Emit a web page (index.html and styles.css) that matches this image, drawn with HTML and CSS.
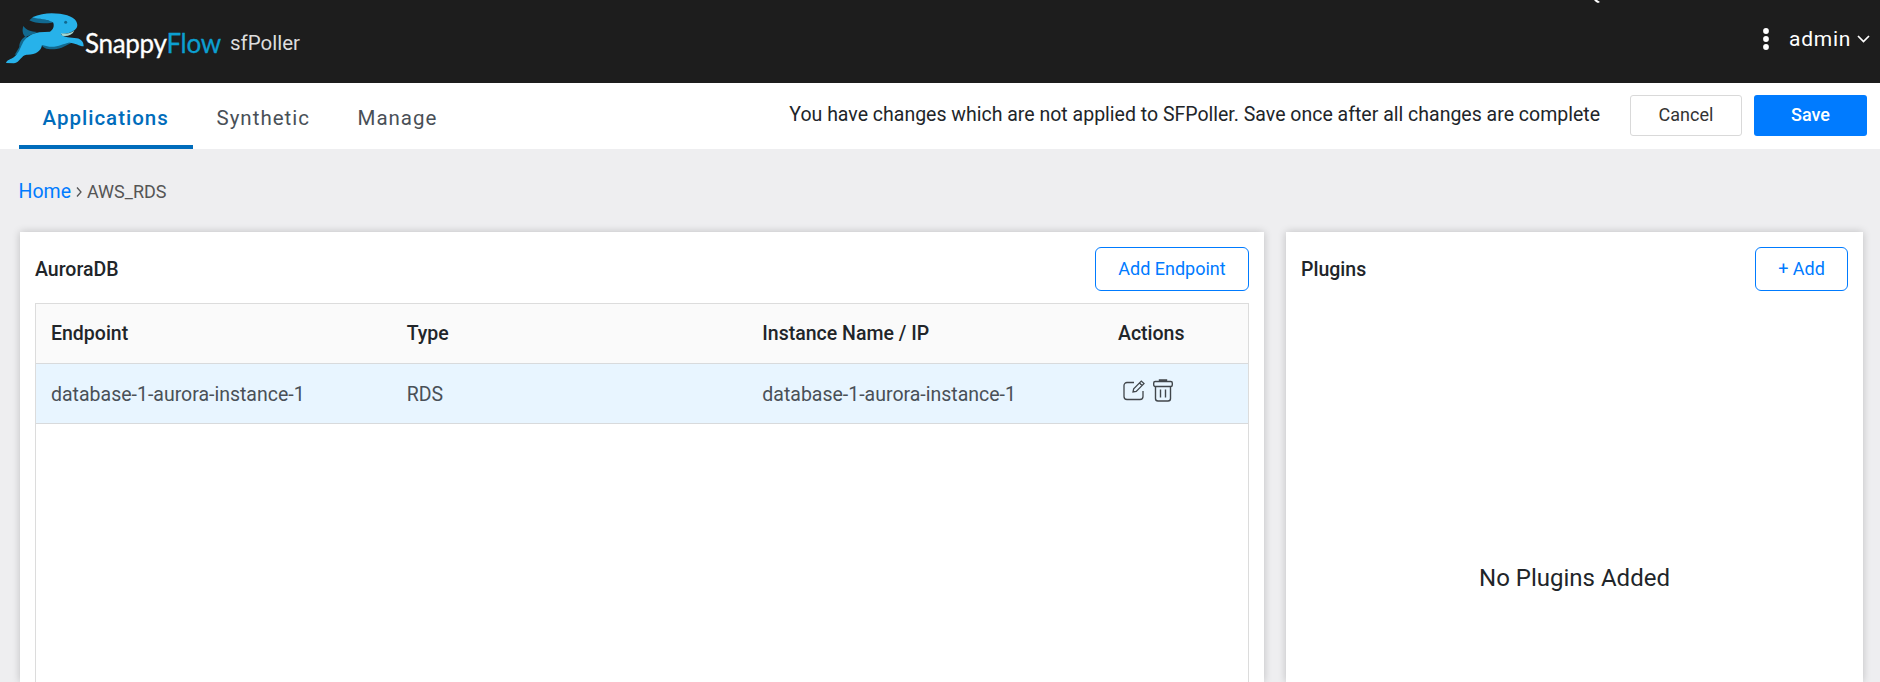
FILE: index.html
```html
<!DOCTYPE html>
<html lang="en">
<head>
<meta charset="utf-8">
<title>SnappyFlow sfPoller</title>
<link rel="stylesheet" href="styles.css">
</head>
<body>
<header class="topbar">
  <div class="brand">
    <svg class="brand-mark" viewBox="0 16 252 162" width="84" height="54">
      <path d="M88 38L100 27 162 42 156 45C130 49 102 47 88 38Z M70 55C66 68 67 80 77 88L112 73C92 72 80 68 70 55Z M80 84C64 92 58 104 58 118L44 142 80 130Z M122 108C130 125 155 130 185 120L215 105Z" fill="#12698f"/>
      <path d="M97 29C125 15 155 15 180 18C212 22 232 35 232 52C232 68 212 78 183 79C192 91 212 89 230 92C244 94 251 103 251 116C236 115 228 106 208 105C190 107 172 120 148 117L126 112C124 130 106 142 80 141C64 142 60 164 42 167L18 166C20 156 33 155 43 147C58 135 60 122 67 109C74 92 92 78 118 74L150 72C160 66 164 54 159 44C140 34 118 35 97 29Z" fill="#27b2ea"/>
      <path d="M183 77C200 79 212 76 223 69C216 83 199 88 187 84Z" fill="#a5d7d1"/>
      <circle cx="197" cy="44" r="4.500" fill="#12698f"/>
    </svg>
    <span class="brand-name">Snappy<span class="brand-flow">Flow</span></span>
    <span class="brand-product">sfPoller</span>
  </div>
  <svg class="cursor" width="10" height="4" viewBox="0 0 10 4"><path d="M4 0H7L10 2 8 3 6 2Z" fill="#fff"/></svg>
  <div class="user">
    <svg width="6" height="22" viewBox="0 0 6 22" fill="#fff"><circle cx="3" cy="3" r="2.900"/><circle cx="3" cy="11" r="2.900"/><circle cx="3" cy="19" r="2.900"/></svg>
    <span class="user-name">admin</span>
    <svg width="13" height="8" viewBox="0 0 13 8" fill="none" stroke="#fff" stroke-width="1.700"><path d="M1 1L6.500 6.500 12 1"/></svg>
  </div>
</header>
<nav class="nav">
  <div class="tabs">
    <a class="tab tab-active">Applications</a>
    <a class="tab">Synthetic</a>
    <a class="tab">Manage</a>
  </div>
  <div class="notice">
    <span class="notice-text">You have changes which are not applied to SFPoller. Save once after all changes are complete</span>
    <button class="btn cancel">Cancel</button>
    <button class="btn save">Save</button>
  </div>
</nav>
<div class="crumbs">
  <a class="home">Home</a>
  <svg width="6" height="10" viewBox="0 0 6 10" fill="none" stroke="#555" stroke-width="1.300"><path d="M1 .5L5 5 1 9.500"/></svg>
  <span class="crumb">AWS_RDS</span>
</div>
<main class="panels">
  <section class="panel">
    <div class="panel-head"><h2 class="title">AuroraDB</h2><button class="outline add-endpoint">Add Endpoint</button></div>
    <div class="table">
      <div class="row row-head"><span>Endpoint</span><span>Type</span><span>Instance Name / IP</span><span>Actions</span></div>
      <div class="row row-data">
        <span>database-1-aurora-instance-1</span><span>RDS</span><span>database-1-aurora-instance-1</span>
        <span class="actions">
          <svg width="22" height="21" viewBox="0 0 22 21" fill="none" stroke="#41464b" stroke-width="1.300"><path d="M11 2.500H4A3 3 0 0 0 1 5.500V16.500A3 3 0 0 0 4 19.500H17A3 3 0 0 0 20 16.500V11"/><path d="M10 12L10.700 8.700 18.300 1.100 21 3.600 13.200 11.400ZM16.500 3L19 5.500"/></svg>
          <svg width="20" height="23" viewBox="0 0 20 23" fill="none" stroke="#41464b" stroke-width="1.400"><path d="M6.500 2.500V1H13.500V2.500" fill="#666"/><rect x=".7" y="2.500" width="18.600" height="5" rx="1.500"/><path d="M2.500 7.500V19.500A2.500 2.500 0 0 0 5 22H15A2.500 2.500 0 0 0 17.500 19.500V7.500M7.500 10.500V18.500M12.500 10.500V18.500"/></svg>
        </span>
      </div>
    </div>
  </section>
  <section class="panel">
    <div class="panel-head"><h2 class="title">Plugins</h2><button class="outline add">+ Add</button></div>
    <p class="empty">No Plugins Added</p>
  </section>
</main>
</body>
</html>
```
FILE: styles.css
```css
* { box-sizing: border-box; }
body { margin: 0; height: 682px; overflow: hidden; display: flex; flex-direction: column; background: #eeeef0; font-family: Roboto, sans-serif; font-size: 19.500px; color: #212529; }
button { font-family: inherit; padding: 0; }
.topbar { position: relative; flex: none; height: 83px; background: #1d1d1d; display: flex; justify-content: space-between; align-items: center; padding-right: 10px; }
.brand { display: flex; align-items: center; height: 83px; white-space: nowrap; }
.brand-mark { margin-top: -3px; overflow: visible; }
.brand-name { margin: 2px 0 0 1px; width: 137px; font-family: Lato, sans-serif; font-size: 26px; letter-spacing: -.3px; color: #fff; -webkit-text-stroke: .3px currentColor; }
.brand-flow { color: #0c9fd0; }
.brand-product { margin: 3px 0 0 8px; font-size: 20.500px; color: #ddd; }
.cursor { position: absolute; left: 1590px; top: 0; }
.user { display: flex; align-items: center; margin-top: -6px; color: #fff; }
.user-name { margin: 0 6px 0 20px; font-size: 21px; letter-spacing: .7px; }
.nav { flex: none; height: 66px; background: #fff; display: flex; justify-content: space-between; padding: 0 13px 0 19px; }
.tabs { display: flex; }
.tab { height: 66px; padding: 2px 24px 0 23.500px; line-height: 66px; font-size: 20.500px; letter-spacing: 1px; color: #495057; white-space: nowrap; overflow: hidden; }
.tab-active { color: #006cbb; font-weight: 500; border-bottom: 4px solid #006cbb; width: 174px; }
.notice { display: flex; padding-top: 12px; white-space: nowrap; }
.notice-text { line-height: 40px; margin-right: 30px; font-size: 19.500px; }
.btn { height: 41px; font-size: 18px; border-radius: 3px; padding-bottom: 2px; }
.cancel { width: 112px; border: 1px solid #d9d9d9; background: #fff; color: #333; }
.save { width: 113px; margin-left: 12px; border: 0; background: #007bff; color: #fff; font-weight: 500; }
.crumbs { flex: none; height: 83px; padding: 3px 0 0 18.500px; display: flex; align-items: center; line-height: 24px; }
.home { color: #007bff; font-size: 19.500px; margin-right: 5px; }
.crumb { color: #555; font-size: 18px; margin-left: 5px; }
.panels { flex: 1; display: grid; grid-template-columns: 1244px 577px; gap: 22px; padding-left: 20px; }
.panel { display: flex; flex-direction: column; padding: 15px 15px 0; background: #fff; box-shadow: 0 0 8px rgba(0,0,0,.2); }
.panel-head { flex: none; height: 44px; display: flex; justify-content: space-between; align-items: center; }
.title { margin: 0; padding-top: 1px; font-size: 19.500px; font-weight: 500; }
.outline { height: 44px; padding-bottom: 2px; border: 1px solid #007bff; border-radius: 6px; background: #fff; color: #007bff; font-size: 18px; }
.add-endpoint { width: 154px; }
.add { width: 93px; }
.table { flex: 1; margin-top: 12px; border: 1px solid #dcdcdc; border-bottom: 0; }
.row { height: 60px; display: grid; grid-template-columns: repeat(3, 355.670px) 1fr; align-items: center; padding-left: 15px; border-bottom: 1px solid #d8dadc; }
.row-head { background: #fafafa; font-size: 19.500px; font-weight: 500; }
.row-data { background: #e8f5ff; color: #495057; padding-top: 1px; }
.actions { display: flex; align-items: center; gap: 8px; padding: 0 0 8px 5px; }
.empty { margin: 272px 0 0; text-align: center; font-size: 24px; line-height: 30px; }
```
